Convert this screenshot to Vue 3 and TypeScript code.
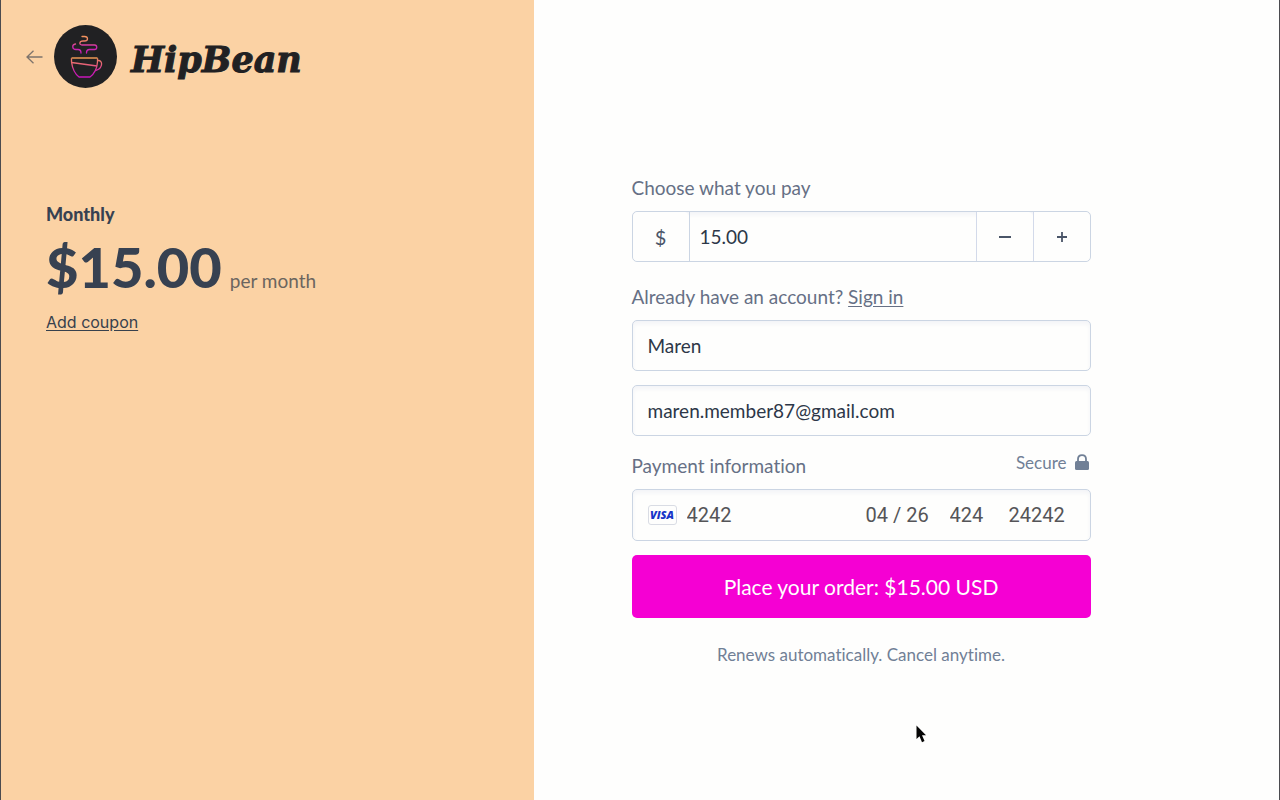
<script setup lang="ts">
import { computed, ref } from 'vue'

const amount = ref<string>('15.00')
const name = ref<string>('Maren')
const email = ref<string>('maren.member87@gmail.com')
const cardNumber = ref<string>('4242')
const expiry = ref<string>('04 / 26')
const cvc = ref<string>('424')
const zip = ref<string>('24242')

const price = computed<string>(() => (Number(amount.value) || 0).toFixed(2))

function step(delta: number): void {
  amount.value = Math.max(0, (Number(amount.value) || 0) + delta).toFixed(2)
}
</script>

<template>
  <div class="checkout">
    <aside class="summary">
      <header class="brand">
        <a class="back" href="#" aria-label="Back">
          <svg width="18" height="14" viewBox="0 0 18 14" fill="none" stroke="currentColor" stroke-width="1.3">
            <path d="M16.500 7H1M7.500 .8L1 7L7.500 13.2" />
          </svg>
        </a>
        <svg class="logo" width="63" height="63" viewBox="0 0 63 63" fill="none" aria-hidden="true">
          <defs>
            <linearGradient id="steam" x1="0" y1="10" x2="0" y2="28" gradientUnits="userSpaceOnUse">
              <stop offset="0" stop-color="#f49a5c" />
              <stop offset=".4" stop-color="#ec7a68" />
              <stop offset=".6" stop-color="#cf2cae" />
              <stop offset="1" stop-color="#c91bb6" />
            </linearGradient>
            <linearGradient id="cup" x1="0" y1="32" x2="0" y2="52" gradientUnits="userSpaceOnUse">
              <stop offset="0" stop-color="#ef875f" />
              <stop offset=".4" stop-color="#e65f78" />
              <stop offset=".7" stop-color="#ce20b0" />
              <stop offset="1" stop-color="#c815b9" />
            </linearGradient>
          </defs>
          <circle cx="31.500" cy="31.500" r="31.500" fill="#212123" />
          <g stroke="url(#steam)" stroke-width="1.300" stroke-linecap="round">
            <path d="M28 11.500H30.500C34.500 11.500 34.500 16 30.500 16H29C25 16 25 20 28 20H40.500C43.500 20 43.500 24.500 40.500 24.500H35.500C33 24.500 32.500 26 32.500 28" />
            <path d="M21.500 19C17.500 19.500 18 24.500 22 24.500H24C26.500 24.500 27 26 27 28" />
          </g>
          <g stroke="url(#cup)" stroke-width="1.300" stroke-linejoin="round">
            <path d="M17.500 33V37C18.500 44 21 49 25 52H36C40 49 43 44 43.500 37V33" />
            <path d="M17.500 37.500L43 41M43.500 35.500H45C49.500 36.500 48 44 41.500 45.500" />
          </g>
          <path d="M17.500 33H43.500" stroke="#b87947" stroke-width="2" />
        </svg>
        <span class="wordmark">HipBean</span>
      </header>

      <section class="plan">
        <h1 class="plan-name">Monthly</h1>
        <p class="plan-price">
          <strong class="price">${{ price }}</strong>
          <span class="period">per month</span>
        </p>
        <a class="coupon" href="#">Add coupon</a>
      </section>
    </aside>

    <main class="payment">
      <form class="form" @submit.prevent>
        <label class="label" for="amount">Choose what you pay</label>
        <div class="box amount">
          <span class="currency">$</span>
          <input id="amount" v-model="amount" class="amount-input" inputmode="decimal" />
          <button class="step" type="button" aria-label="Decrease" @click="step(-1)">
            <svg width="12" height="12" viewBox="0 0 12 12"><path d="M0 6H12" stroke="currentColor" stroke-width="2" /></svg>
          </button>
          <button class="step" type="button" aria-label="Increase" @click="step(1)">
            <svg width="10" height="10" viewBox="0 0 10 10"><path d="M0 5H10M5 0V10" stroke="currentColor" stroke-width="1.800" /></svg>
          </button>
        </div>

        <p class="label account">Already have an account? <a class="signin" href="#">Sign in</a></p>
        <input v-model="name" class="box field" aria-label="Name" />
        <input v-model="email" class="box field" type="email" aria-label="Email" />

        <div class="payment-head">
          <label class="label" for="card-number">Payment information</label>
          <span class="secure">
            Secure
            <svg width="14" height="16" viewBox="0 0 14 16">
              <path d="M3 8V5C3 -.3 11 -.3 11 5V8" fill="none" stroke="currentColor" stroke-width="1.800" />
              <rect y="7" width="14" height="9" rx="1.500" fill="currentColor" />
            </svg>
          </span>
        </div>
        <div class="box card">
          <span class="visa">VISA</span>
          <input id="card-number" v-model="cardNumber" class="number" inputmode="numeric" />
          <input v-model="expiry" class="expiry" aria-label="Expiry date" />
          <input v-model="cvc" class="cvc" aria-label="Security code" />
          <input v-model="zip" class="zip" aria-label="Postal code" />
        </div>

        <button class="submit" type="submit">Place your order: ${{ price }} USD</button>
        <p class="terms">Renews automatically. Cancel anytime.</p>
      </form>
    </main>

    <svg class="pointer" width="11" height="18" viewBox="0 0 11 18" aria-hidden="true">
      <path d="M.5 .5V14L3.500 11.200L6 17.200L8.500 16L6 10.300H10Z" fill="#050505" />
    </svg>
  </div>
</template>

<style>
body {
  margin: 0;
}
</style>

<style scoped>
.checkout {
  position: relative;
  box-sizing: border-box;
  display: grid;
  grid-template-columns: minmax(0, 5fr) minmax(0, 7fr);
  min-height: 100vh;
  border: solid #4b4b4f;
  border-width: 0 1px;
  background: #fefefd;
  color: #2d3748;
  font-family: Lato, "Liberation Sans", sans-serif;
  font-variant-ligatures: none;
}

.checkout *,
.checkout *::before {
  box-sizing: border-box;
}

p,
h1 {
  margin: 0;
}

.summary {
  background: #fbd2a4;
}

.payment {
  padding: 174px 40px 40px 98px;
}

.brand {
  display: flex;
  align-items: center;
  padding: 25px 25px 0;
}

.back {
  display: flex;
  width: 28px;
  color: #7e746c;
}

.logo {
  flex: none;
}

.wordmark {
  margin: 6px 0 0 14px;
  color: #212123;
  font: italic bold 35px/40px "DejaVu Serif", serif;
  -webkit-text-stroke: 1px #212123;
}

.plan {
  display: flex;
  flex-direction: column;
  align-items: flex-start;
  padding: 112px 45px 0;
}

.plan-name {
  font-size: 18px;
  font-weight: 900;
  line-height: 28px;
  color: #374151;
}

.plan-price {
  display: flex;
  align-items: baseline;
  gap: 8px;
}

.price {
  color: #374151;
  font-size: 56px;
  font-weight: 900;
  line-height: 78px;
}

.period {
  color: #6b655f;
  font-size: 19px;
  line-height: 28px;
}

.coupon {
  margin-top: 4px;
  color: #37414d;
  font: 16px/24px Inter, sans-serif;
  text-underline-offset: 2px;
}

.form {
  display: flex;
  flex-direction: column;
  max-width: 459px;
}

.label {
  margin-bottom: 9px;
  color: #667085;
  font-size: 19px;
  line-height: 28px;
}

.box {
  width: 100%;
  height: 51px;
  border: 1px solid #cbd5e3;
  border-radius: 5px;
  background: #fefefd;
  box-shadow: inset 0 3px 4px #f3f4f7;
}

input,
button {
  font-family: inherit;
  font-variant-ligatures: inherit;
}

.amount {
  display: flex;
  align-items: stretch;
}

.currency,
.step {
  display: flex;
  flex: none;
  align-items: center;
  justify-content: center;
  width: 56px;
  border-radius: 5px;
  background: #fefefd;
  color: #4a5568;
  font-size: 20px;
}

.step {
  width: 57px;
  padding: 0;
  border: 0;
  border-left: 1px solid #d3daea;
  border-radius: 0 5px 5px 0;
}

.amount-input {
  flex: 1;
  min-width: 0;
  padding: 0 10px;
  border: 0;
  border-left: 1px solid #cbd5e3;
  background: none;
  color: #2d3748;
  font-size: 19px;
}

.account {
  margin-top: 21px;
}

.signin {
  color: inherit;
  text-underline-offset: 2px;
}

.field {
  padding: 0 15px;
  color: #2d3748;
  font-size: 19px;
}

.field + .field {
  margin-top: 14px;
}

.payment-head {
  display: flex;
  justify-content: space-between;
  margin-top: 16px;
}

.secure {
  display: flex;
  align-items: center;
  gap: 8px;
  height: 20px;
  padding-right: 2px;
  color: #718096;
  font-size: 17px;
}

.card {
  display: flex;
  align-items: center;
  height: 52px;
  padding: 0 11px 0 15px;
}

.card input {
  flex: none;
  min-width: 0;
  padding: 0;
  border: 0;
  background: none;
  color: #555558;
  font: 20px/28px Roboto, sans-serif;
}

.card .number {
  flex: 1;
  margin-left: 10px;
}

.card .expiry {
  width: 84px;
}

.card .cvc {
  width: 59px;
}

.card .zip {
  width: 70px;
}

.visa {
  flex: none;
  width: 29px;
  border: 1px solid #d9dce4;
  border-radius: 3px;
  color: #1735c8;
  font: italic 800 11px/18px "Open Sans", sans-serif;
  text-align: center;
}

.submit {
  height: 63px;
  margin-top: 14px;
  border: 0;
  border-radius: 5px;
  background: #f500d3;
  color: #fff;
  font-size: 21px;
}

.terms {
  margin-top: 23px;
  color: #718096;
  font-size: 17px;
  line-height: 28px;
  text-align: center;
}

.pointer {
  position: absolute;
  top: 725px;
  left: 915px;
}
</style>
